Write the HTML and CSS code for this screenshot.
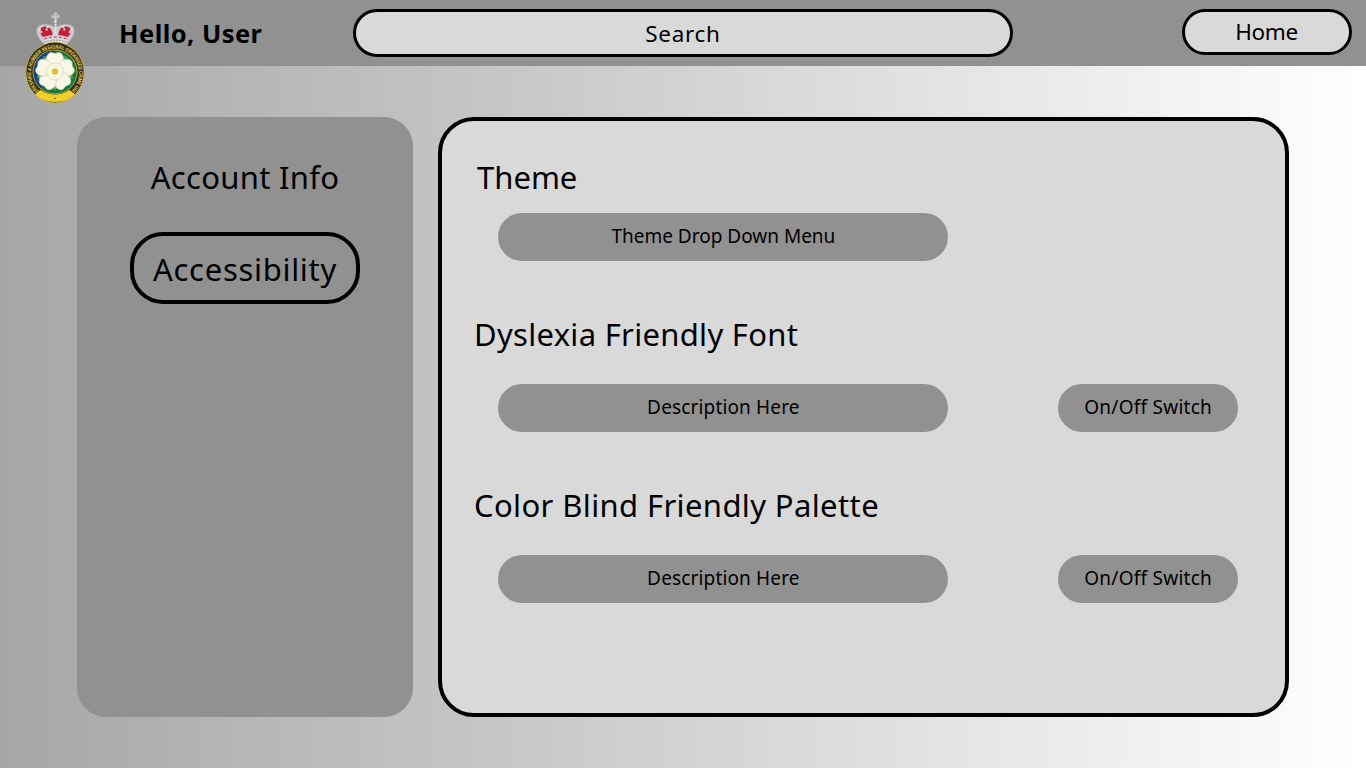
FILE: index.html
```html
<!DOCTYPE html>
<html lang="en">
<head>
<meta charset="utf-8">
<title>Accessibility Settings</title>
<link rel="stylesheet" href="styles.css">
</head>
<body>
<header class="topbar">
  <svg class="crest" viewBox="0 0 64 96" aria-label="Crest">
    <defs><path id="ring" d="M18.500 84A24 24.300 0 1 1 45.500 84"/></defs>
    <g fill="#c9c9cf" stroke="#aeb0b5" stroke-width=".5">
      <path d="M30.700 3.600h3.600l-.8 3 2.900-.8v3.500l-2.900-.8.8 3.500h-3.600l.8-3.500-2.900.8V5.800l2.900.8z"/>
      <path d="M20 34C11 25 12 16 21 15.500c5-.5 9 1 11.500 3 2.500-2 6.500-3.500 11.500-3 9 .5 10 9.500 1 18.500z"/>
    </g>
    <path fill="#c51e3b" d="M20 28c-5-5-3-10.500 2-10.500 5 0 8 4 7.500 10.500zm25 0c5-5 3-10.500-2-10.500-5 0-8 4-7.500 10.500z"/>
    <path d="M32.500 12v15M16 20l3 4M49 20l-3 4M25 17l-2 5M40 17l2 5" fill="none" stroke="#e9e9ec" stroke-width="2" stroke-dasharray="2 .7"/>
    <path d="M20 28q12.500-4 25 0l-1 7H21z" fill="#d8d8dc"/>
    <path d="M21 30q11.500-4 23 0" fill="none" stroke="#c51e3b" stroke-width="1" stroke-dasharray="3 2"/>
    <path d="M21 33q11.500-3.500 23 0" fill="none" stroke="#949aa1" stroke-width="1" stroke-dasharray="2 1"/>
    <ellipse cx="32" cy="63.500" rx="29.300" ry="30.500" fill="#d9b930"/>
    <ellipse cx="32" cy="63.500" rx="28.700" ry="29.900" fill="#343021"/>
    <path d="M17.500 81Q32 90 46.500 81L52 85.500Q44 93.100 32 93.100T12 85.500z" fill="#f0cf2b"/>
    <circle cx="32" cy="63" r="22" fill="#187641" stroke="#e3c52e" stroke-width=".8"/>
    <path d="M32 41.500A21.500 21.500 0 0 0 18 79.300C27 73 28 50 32 41.500z" fill="#174785"/>
    <text class="crest-text" fill="#ecd04a"><textPath href="#ring" textLength="121" lengthAdjust="spacingAndGlyphs">YORKSHIRE &amp; HUMBER REGIONAL ORGANISED CRIME UNIT</textPath></text>
    <g fill="#66a452"><path d="M32 82l-3-5h6z"/><path d="M32 82l-3-5h6z" transform="rotate(72 32 62.500)"/><path d="M32 82l-3-5h6z" transform="rotate(144 32 62.500)"/><path d="M32 82l-3-5h6z" transform="rotate(216 32 62.500)"/><path d="M32 82l-3-5h6z" transform="rotate(288 32 62.500)"/></g>
    <g fill="#f8f7e8" stroke="#d4d6b6" stroke-width=".8">
      <path id="petal" d="M32 62.500C21 55 22 45 28 43.500q4 1 4 1t4-1c6 1.500 7 11.500-4 19z"/>
      <use href="#petal" transform="rotate(72 32 62.500)"/>
      <use href="#petal" transform="rotate(144 32 62.500)"/>
      <use href="#petal" transform="rotate(216 32 62.500)"/>
      <use href="#petal" transform="rotate(288 32 62.500)"/>
    </g>
    <circle cx="32" cy="62.500" r="8.500" fill="#faf9ec" stroke="#d6d5a9" stroke-width=".8"/>
    <circle cx="32" cy="62.500" r="5.800" fill="none" stroke="#e3dfb8" stroke-width="1" stroke-dasharray="1 1.500"/>
    <circle cx="32" cy="62.500" r="3.200" fill="#e3bd36"/>
    <circle cx="32" cy="89.500" r=".8" fill="#493f16"/>
  </svg>
  <div class="greeting">Hello, User</div>
  <div class="search"><span class="t-search">Search</span></div>
  <div class="home"><span class="t-home">Home</span></div>
</header>
<main class="page">
  <nav class="sidebar">
    <div class="nav-item"><span class="t-account">Account Info</span></div>
    <div class="nav-item active"><span class="t-access">Accessibility</span></div>
  </nav>
  <section class="panel">
    <div class="setting theme">
      <h2>Theme</h2>
      <div class="controls"><div class="pill wide">Theme Drop Down Menu</div></div>
    </div>
    <div class="setting">
      <h2 class="t-dyslexia">Dyslexia Friendly Font</h2>
      <div class="controls"><div class="pill wide t-desc">Description Here</div><div class="pill switch">On/Off Switch</div></div>
    </div>
    <div class="setting">
      <h2 class="t-color">Color Blind Friendly Palette</h2>
      <div class="controls"><div class="pill wide t-desc">Description Here</div><div class="pill switch">On/Off Switch</div></div>
    </div>
  </section>
</main>
</body>
</html>
```
FILE: styles.css
```css
* { box-sizing: border-box; }
body {
  margin: 0;
  height: 768px;
  overflow: hidden;
  background: linear-gradient(90deg, #a6a6a6, #fff);
  color: #000;
  font-family: "Noto Sans", sans-serif;
  white-space: nowrap;
}
.topbar {
  position: relative;
  display: flex;
  height: 66px;
  padding: 9px 14.5px 0 119px;
  background: #919191;
}
.crest { position: absolute; left: 23.3px; top: 8.5px; width: 64px; height: 96px; }
.crest-text { font: bold 5.4px "Liberation Sans", sans-serif; }
.greeting { width: 234px; font-size: 25.5px; font-weight: 700; line-height: 49px; letter-spacing: 0.45px; }
.search, .home {
  display: flex;
  justify-content: center;
  border: 3px solid #000;
  border-radius: 24px;
  background: #d9d9d9;
  font-size: 22.5px;
}
.search { width: 660px; height: 48px; line-height: 44px; }
.t-search { letter-spacing: 0.7px; }
.home { width: 170px; height: 46px; margin-left: auto; line-height: 40px; }
.t-home { letter-spacing: -0.4px; }
.page { display: flex; gap: 25px; padding: 51px 77px; }
.sidebar {
  display: flex;
  flex-direction: column;
  align-items: center;
  gap: 18px;
  width: 336px;
  height: 600px;
  padding-top: 25px;
  border-radius: 29px;
  background: #919191;
}
.nav-item { width: 230px; height: 72px; line-height: 70px; font-size: 31px; text-align: center; }
.t-account { letter-spacing: 0.3px; }
.t-access { letter-spacing: 0.7px; }
.active { border: 4px solid #000; border-radius: 33px; line-height: 66px; }
.panel {
  width: 851px;
  height: 600px;
  padding: 34px 47px 0 32px;
  border: 4px solid #000;
  border-radius: 36px;
  background: #d9d9d9;
}
.setting { height: 171px; }
.setting h2 { margin: 0; height: 72px; font-size: 31px; font-weight: 400; line-height: 44px; }
.setting .t-dyslexia { letter-spacing: 0.3px; }
.setting .t-color { letter-spacing: 0.38px; }
.theme { height: 157px; }
.setting.theme h2 { height: 58.4px; padding-left: 3px; }
.controls { display: flex; gap: 110px; padding-left: 24.4px; }
.pill {
  display: flex;
  justify-content: center;
  height: 48px;
  border-radius: 24px;
  background: #919191;
  font-size: 19px;
  line-height: 46px;
}
.wide { width: 450px; }
.t-desc { letter-spacing: 0.15px; }
.switch { width: 179.5px; letter-spacing: 0.25px; }
```
